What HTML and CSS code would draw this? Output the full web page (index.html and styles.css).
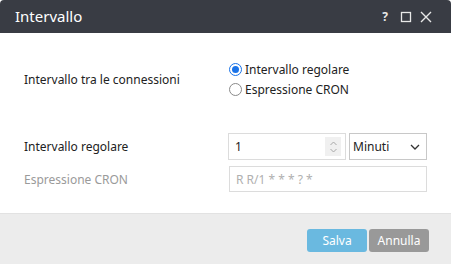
FILE: index.html
```html
<!DOCTYPE html>
<html>
<head>
<meta charset="utf-8">
<link rel="stylesheet" href="styles.css">
</head>
<body>
<div class="dialog">
  <div class="titlebar">
    <span class="title">Intervallo</span>
    <div class="tools">
      <span class="help">?</span>
      <svg class="ico" width="12" height="12" viewBox="0 0 12 12"><rect x="1.5" y="1.5" width="9" height="9" fill="none" stroke="#e8e8e8" stroke-width="1.3"/></svg>
      <svg class="ico" width="12" height="12" viewBox="0 0 12 12"><path d="M1 1L11 11M11 1L1 11" stroke="#e8e8e8" stroke-width="1.4"/></svg>
    </div>
  </div>
  <div class="content">
    <div class="row row-radio">
      <div class="label">Intervallo tra le connessioni</div>
      <div class="radios">
        <label class="radio"><span class="dot checked"></span>Intervallo regolare</label>
        <label class="radio"><span class="dot"></span>Espressione CRON</label>
      </div>
    </div>
    <div class="row row-interval">
      <div class="label">Intervallo regolare</div>
      <div class="controls">
        <div class="num">
          <span class="val">1</span>
          <span class="spin">
            <svg width="9" height="14" viewBox="0 0 9 14"><path d="M1.5 5L4.5 2L7.5 5M1.5 9L4.5 12L7.5 9" fill="none" stroke="#a8a8a8" stroke-width="1"/></svg>
          </span>
        </div>
        <div class="select">
          <span>Minuti</span>
          <svg width="10" height="6" viewBox="0 0 10 6"><path d="M1 1L5 5L9 1" fill="none" stroke="#333" stroke-width="1.3"/></svg>
        </div>
      </div>
    </div>
    <div class="row row-cron">
      <div class="label muted">Espressione CRON</div>
      <div class="cron">R R/1 * * * ? *</div>
    </div>
  </div>
  <div class="footer">
    <button class="btn save">Salva</button>
    <button class="btn cancel">Annulla</button>
  </div>
</div>
</body>
</html>
```
FILE: styles.css
```css
html, body {
  margin: 0;
  padding: 0;
  background: #ffffff;
}
body {
  font-family: "Noto Sans", "Open Sans", sans-serif;
  font-size: 12px;
  color: #222;
}
.dialog {
  width: 451px;
  height: 264px;
  display: flex;
  flex-direction: column;
  border-radius: 4px 4px 0 0;
  overflow: hidden;
}
.titlebar {
  height: 33px;
  background: #393c44;
  display: flex;
  align-items: center;
  justify-content: space-between;
  padding: 0 19px 0 15px;
  box-sizing: border-box;
}
.title {
  color: #ffffff;
  font-size: 15px;
  margin-top: -1px;
}
.tools {
  display: flex;
  align-items: center;
  gap: 8px;
}
.help {
  color: #e8e8e8;
  font-weight: bold;
  font-size: 12px;
  margin-right: 4px;
}
.content {
  flex: 1;
  background: #fff;
  border-bottom: 1px solid #e2e2e2;
  padding: 0 24px;
}
.row {
  display: flex;
}
.label {
  width: 205px;
}
.muted {
  color: #9a9a9a;
}
.row-radio {
  margin-top: 28px;
  align-items: center;
}
.radios {
  display: flex;
  flex-direction: column;
  gap: 3px;
}
.radio {
  display: flex;
  align-items: center;
  height: 17px;
}
.dot {
  width: 13px;
  height: 13px;
  border: 1px solid #8a8a8a;
  border-radius: 50%;
  box-sizing: border-box;
  margin-right: 3px;
  position: relative;
}
.dot.checked {
  border: 1px solid #1a73e8;
  background: #fff;
}
.dot.checked::after {
  content: "";
  position: absolute;
  left: 2px;
  top: 2px;
  width: 7px;
  height: 7px;
  border-radius: 50%;
  background: #1a73e8;
}
.row-interval {
  margin-top: 35px;
  align-items: center;
}
.controls {
  display: flex;
  gap: 3px;
}
.num {
  width: 118px;
  height: 27px;
  border: 1px solid #dcdcdc;
  box-sizing: border-box;
  display: flex;
  align-items: center;
  justify-content: space-between;
  padding: 0 4px 0 6px;
}
.spin {
  width: 16px;
  height: 19px;
  background: #f0f0f0;
  display: flex;
  align-items: center;
  justify-content: center;
}
.select {
  width: 78px;
  height: 27px;
  border: 1px solid #c8c8c8;
  box-sizing: border-box;
  display: flex;
  align-items: center;
  justify-content: space-between;
  padding: 0 6px 0 3px;
  color: #222;
}
.row-cron {
  margin-top: 6px;
  align-items: center;
}
.cron {
  width: 198px;
  height: 26px;
  border: 1px solid #dcdcdc;
  box-sizing: border-box;
  display: flex;
  align-items: center;
  padding: 0 6px;
  color: #b0b0b0;
}
.footer {
  height: 50px;
  background: #ececec;
  display: flex;
  justify-content: flex-end;
  align-items: flex-start;
  padding: 15px 22px 0 0;
  box-sizing: border-box;
  gap: 2px;
}
.btn {
  font-family: inherit;
  font-size: 12px;
  color: #fff;
  border: none;
  border-radius: 3px;
  height: 23px;
  width: 60px;
  padding: 0;
}
.save {
  background: #6ab9e0;
}
.cancel {
  background: #999999;
}
```
